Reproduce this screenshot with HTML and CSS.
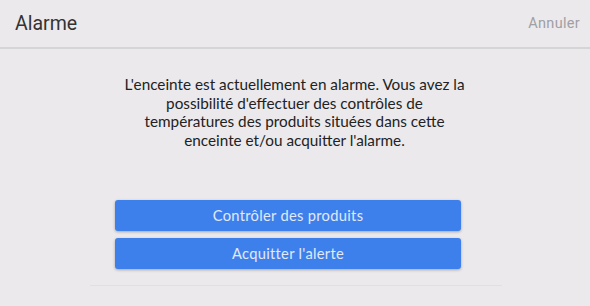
FILE: index.html
```html
<!DOCTYPE html>
<html lang="fr">

<head>
  <meta charset="UTF-8">
  <meta name="viewport" content="width=device-width, initial-scale=1.0">
  <title>Alarme</title>
  <link rel="stylesheet" href="styles.css">
</head>

<body>

  <div class="header">
    <h1 class="title">Alarme</h1>
    <a class="cancel" href="#">Annuler</a>
  </div>

  <div class="content">
    <p class="message">L'enceinte est actuellement en alarme. Vous avez la possibilité d'effectuer des contrôles de températures des produits situées dans cette enceinte et/ou acquitter l'alarme.</p>

    <div class="actions">
      <button class="btn">Contrôler des produits</button>
      <button class="btn">Acquitter l'alerte</button>
    </div>

    <div class="separator"></div>
  </div>

</body>

</html>
```

FILE: styles.css
```css
body {
  margin: 0;
  background-color: #ebe9ec;
  font-family: Lato, "Open Sans", sans-serif;
}

.header {
  display: flex;
  justify-content: space-between;
  align-items: center;
  height: 47px;
  padding: 0 10px 0 15px;
  border-bottom: 2px solid #d5d4d7;
}

.title {
  margin: 0;
  font-family: Roboto, sans-serif;
  font-size: 19.5px;
  font-weight: normal;
  color: #333;
}

.cancel {
  font-family: Roboto, sans-serif;
  font-size: 14.5px;
  letter-spacing: 0.3px;
  color: #a09fa2;
  text-decoration: none;
}

.content {
  display: flex;
  flex-direction: column;
  align-items: center;
  padding-right: 14px;
}

.message {
  width: 345px;
  margin: 26px 0 0 13px;
  font-size: 15.3px;
  line-height: 18.7px;
  text-align: center;
  color: #222;
}

.actions {
  display: flex;
  flex-direction: column;
  gap: 7px;
  margin-top: 50px;
}

.btn {
  width: 346px;
  height: 31px;
  padding: 0;
  border: none;
  border-radius: 3px;
  background-color: #3d80ec;
  color: #e2e9f7;
  font-family: Lato, sans-serif;
  font-size: 14.7px;
  letter-spacing: 0.3px;
  box-shadow: 0 1px 3px rgba(0, 0, 0, 0.3);
  cursor: pointer;
}

.separator {
  width: 412px;
  margin: 16px 0 0 16px;
  border-top: 1px solid #e0dfe2;
}
```
